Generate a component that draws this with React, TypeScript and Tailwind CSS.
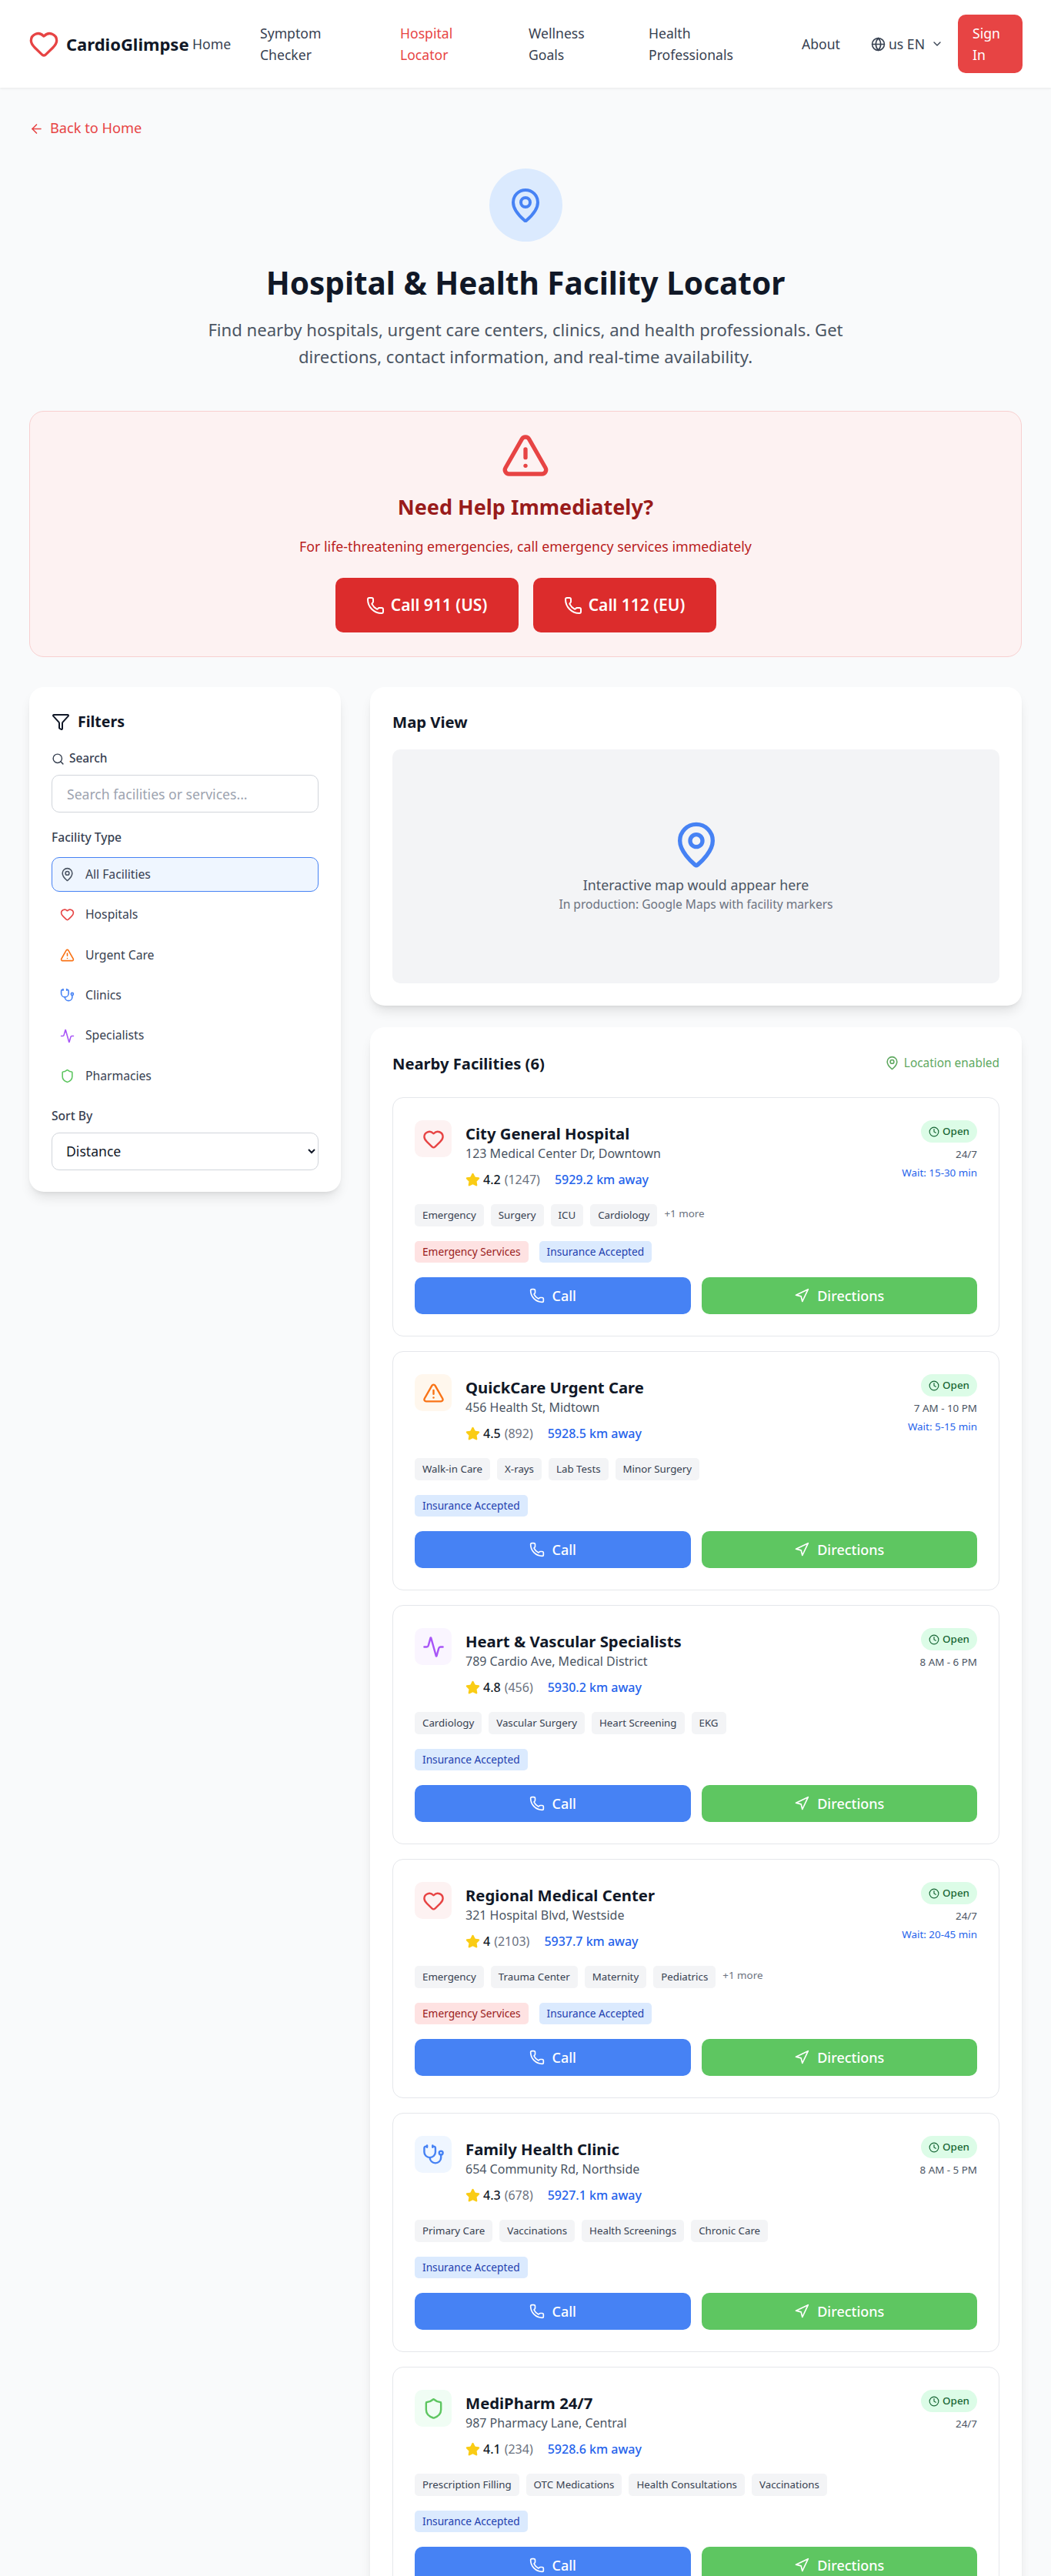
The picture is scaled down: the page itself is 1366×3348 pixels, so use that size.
import {
  Activity,
  ArrowLeft,
  ChevronDown,
  Clock,
  Funnel,
  Globe,
  Heart,
  MapPin,
  Navigation,
  Phone,
  Search,
  Shield,
  Star,
  Stethoscope,
  TriangleAlert,
} from "lucide-react";
import type { LucideIcon } from "lucide-react";

const NAV_ITEMS = [
  { label: "Home", width: "w-[88px]", active: false },
  { label: "Symptom Checker", width: "w-[182px]", active: false },
  { label: "Hospital Locator", width: "w-[167px]", active: true },
  { label: "Wellness Goals", width: "w-[156px]", active: false },
  { label: "Health Professionals", width: "w-[199px]", active: false },
  { label: "About", width: "w-[90px]", active: false },
];

const FILTERS: { label: string; Icon: LucideIcon; color: string }[] = [
  { label: "All Facilities", Icon: MapPin, color: "text-[#4b5563]" },
  { label: "Hospitals", Icon: Heart, color: "text-[#e74444]" },
  { label: "Urgent Care", Icon: TriangleAlert, color: "text-[#f97316]" },
  { label: "Clinics", Icon: Stethoscope, color: "text-[#4682f4]" },
  { label: "Specialists", Icon: Activity, color: "text-[#a855f7]" },
  { label: "Pharmacies", Icon: Shield, color: "text-[#5ec661]" },
];

type Facility = {
  name: string;
  address: string;
  rating: string;
  reviews: string;
  distance: string;
  tags: string[];
  more?: boolean;
  emergency?: boolean;
  hours: string;
  wait?: string;
  Icon: LucideIcon;
  iconClass: string;
};

const FACILITIES: Facility[] = [
  {
    name: "City General Hospital",
    address: "123 Medical Center Dr, Downtown",
    rating: "4.2",
    reviews: "(1247)",
    distance: "5929.2 km away",
    tags: ["Emergency", "Surgery", "ICU", "Cardiology"],
    more: true,
    emergency: true,
    hours: "24/7",
    wait: "Wait: 15-30 min",
    Icon: Heart,
    iconClass: "bg-[#fdf2f2] text-[#e74444]",
  },
  {
    name: "QuickCare Urgent Care",
    address: "456 Health St, Midtown",
    rating: "4.5",
    reviews: "(892)",
    distance: "5928.5 km away",
    tags: ["Walk-in Care", "X-rays", "Lab Tests", "Minor Surgery"],
    hours: "7 AM - 10 PM",
    wait: "Wait: 5-15 min",
    Icon: TriangleAlert,
    iconClass: "bg-[#fff7ed] text-[#f97316]",
  },
  {
    name: "Heart & Vascular Specialists",
    address: "789 Cardio Ave, Medical District",
    rating: "4.8",
    reviews: "(456)",
    distance: "5930.2 km away",
    tags: ["Cardiology", "Vascular Surgery", "Heart Screening", "EKG"],
    hours: "8 AM - 6 PM",
    Icon: Activity,
    iconClass: "bg-[#faf5ff] text-[#a855f7]",
  },
  {
    name: "Regional Medical Center",
    address: "321 Hospital Blvd, Westside",
    rating: "4",
    reviews: "(2103)",
    distance: "5937.7 km away",
    tags: ["Emergency", "Trauma Center", "Maternity", "Pediatrics"],
    more: true,
    emergency: true,
    hours: "24/7",
    wait: "Wait: 20-45 min",
    Icon: Heart,
    iconClass: "bg-[#fdf2f2] text-[#e74444]",
  },
  {
    name: "Family Health Clinic",
    address: "654 Community Rd, Northside",
    rating: "4.3",
    reviews: "(678)",
    distance: "5927.1 km away",
    tags: ["Primary Care", "Vaccinations", "Health Screenings", "Chronic Care"],
    hours: "8 AM - 5 PM",
    Icon: Stethoscope,
    iconClass: "bg-[#eff6ff] text-[#4682f4]",
  },
  {
    name: "MediPharm 24/7",
    address: "987 Pharmacy Lane, Central",
    rating: "4.1",
    reviews: "(234)",
    distance: "5928.6 km away",
    tags: ["Prescription Filling", "OTC Medications", "Health Consultations", "Vaccinations"],
    hours: "24/7",
    Icon: Shield,
    iconClass: "bg-[#f0fdf4] text-[#5ec661]",
  },
];

function Header() {
  return (
    <header className="flex h-[114px] items-center bg-white pl-[40px] pr-[37px] shadow-[0_1px_3px_rgba(0,0,0,0.08)]">
      <div className="flex w-[210px] shrink-0 items-center">
        <Heart className="h-[40px] w-[40px] shrink-0 text-[#e74444] -ml-[3px]" strokeWidth={2} />
        <span className="ml-[9px] text-[22px] font-bold text-[#111827]">CardioGlimpse</span>
      </div>
      <nav className="flex flex-1 items-center text-[17.6px] leading-[28px] text-[#374151]">
        {NAV_ITEMS.map((item) => (
          <a key={item.label} className={[item.width, "shrink-0", item.active ? "text-[#e74444]" : ""].join(" ")}>
            <span className="block w-min">{item.label}</span>
          </a>
        ))}
        <div className="flex w-[113px] shrink-0 items-center gap-[4px]">
          <Globe className="h-[19px] w-[19px]" />
          <span>us EN</span>
          <ChevronDown className="ml-[4px] h-[16px] w-[16px]" />
        </div>
      </nav>
      <button
        type="button"
        className="h-[76px] w-[84px] shrink-0 rounded-[10px] bg-[#e74444] pl-[19px] text-left text-[17.6px] leading-[28px] text-white"
      >
        <span className="block w-min">Sign In</span>
      </button>
    </header>
  );
}

function Hero() {
  return (
    <div className="flex flex-col items-center">
      <div className="flex h-[95px] w-[95px] items-center justify-center rounded-full bg-[#dbeafe]">
        <MapPin className="h-[48px] w-[48px] text-[#4682f4]" />
      </div>
      <h1 className="mt-[24px] text-[40.5px] leading-[60px] font-bold text-[#111827]">Hospital &amp; Health Facility Locator</h1>
      <p className="mt-[13px] w-[860px] text-center text-[22.1px] leading-[35px] text-[#4b5563]">
        Find nearby hospitals, urgent care centers, clinics, and health professionals. Get directions, contact information, and real-time availability.
      </p>
    </div>
  );
}

function EmergencyBanner() {
  return (
    <section className="mt-[53px] flex h-[320px] flex-col items-center rounded-[19px] border border-[#f8d0d0] bg-[#fdf2f2] pt-[25px]">
      <TriangleAlert className="h-[64px] w-[64px] text-[#e74444]" />
      <h2 className="mt-[15px] text-[27px] leading-[40px] font-bold text-[#991b1b]">Need Help Immediately?</h2>
      <p className="mt-[17px] text-[17.8px] leading-[28px] text-[#b91c1c]">For life-threatening emergencies, call emergency services immediately</p>
      <div className="mt-[27px] flex gap-[19px]">
        <EmergencyButton label="Call 911 (US)" />
        <EmergencyButton label="Call 112 (EU)" />
      </div>
    </section>
  );
}

function EmergencyButton({ label }: { label: string }) {
  return (
    <button
      type="button"
      className="flex h-[71px] w-[238px] items-center justify-center gap-[8px] rounded-[10px] bg-[#dc2c2c] text-[21px] font-semibold text-white"
    >
      <Phone className="h-[24px] w-[24px]" />
      {label}
    </button>
  );
}

function FiltersPanel() {
  return (
    <aside className="h-[656px] w-[405px] shrink-0 rounded-[19px] bg-white px-[29px] pt-[29px] shadow-[0_10px_15px_-3px_rgba(0,0,0,0.1),0_4px_6px_-4px_rgba(0,0,0,0.1)]">
      <h3 className="flex h-[32px] items-center gap-[10px] text-[19.5px] font-bold text-[#111827]">
        <Funnel className="h-[24px] w-[24px]" />
        Filters
      </h3>
      <label className="mt-[20px] flex h-[24px] items-center gap-[6px] text-[15.4px] font-medium text-[#374151]">
        <Search className="h-[17px] w-[17px]" />
        Search
      </label>
      <input
        readOnly
        placeholder="Search facilities or services..."
        className="mt-[9px] h-[49px] w-full rounded-[10px] border border-[#d1d5db] bg-white px-[19px] text-[17.6px] text-[#111827] outline-none placeholder:text-[#9ca3af]"
      />
      <p className="mt-[20px] h-[24px] text-[15.6px] leading-[24px] font-medium text-[#374151]">Facility Type</p>
      <div className="mt-[14px] flex flex-col gap-[7.4px]">
        {FILTERS.map(({ label, Icon, color }, i) => (
          <button
            key={label}
            type="button"
            className={[
              "flex h-[45px] items-center gap-[14px] rounded-[10px] border px-[10px] text-left text-[15.7px] text-[#374151]",
              i === 0 ? "border-[#4682f4] bg-[#eff6ff]" : "border-transparent",
            ].join(" ")}
          >
            <Icon className={["h-[19px] w-[19px]", color].join(" ")} />
            {label}
          </button>
        ))}
      </div>
      <p className="mt-[17px] h-[24px] text-[15.6px] leading-[24px] font-medium text-[#374151]">Sort By</p>
      <select className="mt-[10px] h-[49px] w-full rounded-[10px] border border-[#d1d5db] bg-white px-[14px] text-[17.6px] text-[#111827]">
        <option>Distance</option>
      </select>
    </aside>
  );
}

function MapCard() {
  return (
    <section className="h-[414px] rounded-[19px] bg-white p-[29px] shadow-[0_10px_15px_-3px_rgba(0,0,0,0.1),0_4px_6px_-4px_rgba(0,0,0,0.1)]">
      <h3 className="mt-[2px] h-[28px] text-[20.3px] leading-[28px] font-bold text-[#111827]">Map View</h3>
      <div className="mt-[22px] flex h-[304px] flex-col items-center justify-center rounded-[10px] bg-[#f3f4f6]">
        <MapPin className="h-[64px] w-[64px] text-[#4682f4]" />
        <p className="mt-[6px] text-[17.8px] leading-[28px] text-[#4b5563]">Interactive map would appear here</p>
        <p className="text-[15.6px] leading-[22px] text-[#6b7280]">In production: Google Maps with facility markers</p>
      </div>
    </section>
  );
}

function Tag({ children, className }: { children: string; className: string }) {
  return <span className={["rounded-[5px] px-[10px]", className].join(" ")}>{children}</span>;
}

function FacilityCard({ facility }: { facility: Facility }) {
  const { Icon } = facility;
  return (
    <article className="flex h-[311px] flex-col rounded-[14px] border border-[#e5e7eb] px-[28px] pt-[29px]">
      <div className="flex h-[109px] items-start justify-between">
        <div className="flex gap-[18px]">
          <div className={["flex h-[48px] w-[48px] items-center justify-center rounded-[10px]", facility.iconClass].join(" ")}>
            <Icon className="h-[29px] w-[29px]" />
          </div>
          <div>
            <h4 className="-mt-[1px] text-[20.3px] leading-[36px] font-bold text-[#111827]">{facility.name}</h4>
            <p className="-mt-[4px] text-[16px] leading-[24px] text-[#4b5563]">{facility.address}</p>
            <div className="mt-[10px] flex items-center text-[16px] leading-[24px]">
              <Star className="h-[19px] w-[19px] fill-[#facc15] text-[#facc15]" />
              <span className="ml-[4px] font-medium text-[#111827]">{facility.rating}</span>
              <span className="ml-[5px] text-[#6b7280]">{facility.reviews}</span>
              <span className="ml-[19px] font-medium text-[#2563eb]">{facility.distance}</span>
            </div>
          </div>
        </div>
        <div className="flex flex-col items-end">
          <span className="flex h-[29px] items-center gap-[4px] rounded-full bg-[#dcfce7] px-[10px] text-[13.4px] font-medium text-[#166534]">
            <Clock className="h-[14px] w-[14px]" />
            Open
          </span>
          <span className="mt-[5px] text-[13.4px] leading-[20px] text-[#4b5563]">{facility.hours}</span>
          {facility.wait && <span className="mt-[4px] text-[13.4px] leading-[20px] text-[#2563eb]">{facility.wait}</span>}
        </div>
      </div>
      <div className="flex h-[29px] items-start gap-[9px] text-[13.3px] leading-[29px]">
        {facility.tags.map((tag) => (
          <Tag key={tag} className="bg-[#f3f4f6] text-[#374151]">{tag}</Tag>
        ))}
        {facility.more && <span className="text-[13.4px] leading-[24px] text-[#6b7280]">+1 more</span>}
      </div>
      <div className="mt-[19px] flex h-[28px] gap-[14px] text-[13.7px] leading-[28px]">
        {facility.emergency && <Tag className="bg-[#fee2e2] text-[#991b1b]">Emergency Services</Tag>}
        <Tag className="bg-[#dbeafe] text-[#1e40af]">Insurance Accepted</Tag>
      </div>
      <div className="mt-[19px] grid grid-cols-2 gap-[14px]">
        <button type="button" className="flex h-[48px] items-center justify-center gap-[10px] rounded-[10px] bg-[#4682f4] text-[18px] font-medium text-white">
          <Phone className="h-[20px] w-[20px]" />
          Call
        </button>
        <button type="button" className="flex h-[48px] items-center justify-center gap-[10px] rounded-[10px] bg-[#5ec661] text-[18px] font-medium text-white">
          <Navigation className="h-[20px] w-[20px]" />
          Directions
        </button>
      </div>
    </article>
  );
}

export default function App() {
  return (
    <div className="h-[3348px] overflow-hidden bg-[#f9fafb] font-['Noto_Sans',sans-serif]">
      <Header />
      <main className="px-[38px] pt-[39px]">
        <a className="flex h-[28px] items-center gap-[8px] text-[18.2px] text-[#e74444]">
          <ArrowLeft className="h-[19px] w-[19px]" />
          Back to Home
        </a>
        <div className="mt-[38px]">
          <Hero />
        </div>
        <EmergencyBanner />
        <div className="mt-[39px] flex items-start gap-[38px]">
          <FiltersPanel />
          <div className="flex min-w-0 flex-1 flex-col gap-[28px]">
            <MapCard />
            <section className="rounded-[19px] bg-white px-[29px] pt-[29px] shadow-[0_10px_15px_-3px_rgba(0,0,0,0.1),0_4px_6px_-4px_rgba(0,0,0,0.1)]">
              <div className="flex h-[36px] items-center justify-between">
                <h3 className="text-[20.2px] font-bold text-[#111827]">Nearby Facilities (6)</h3>
                <span className="flex items-center gap-[6px] text-[15.4px] text-[#5ea85f]">
                  <MapPin className="h-[19px] w-[19px]" />
                  Location enabled
                </span>
              </div>
              <div className="mt-[26px] flex flex-col gap-[19px]">
                {FACILITIES.map((facility) => (
                  <FacilityCard key={facility.name} facility={facility} />
                ))}
              </div>
            </section>
          </div>
        </div>
      </main>
    </div>
  );
}
